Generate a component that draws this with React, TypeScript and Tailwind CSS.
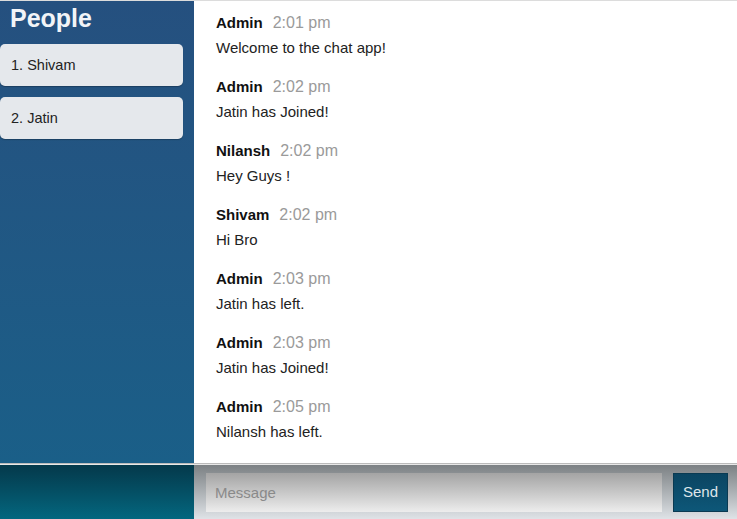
import React from "react";

const people = ["Shivam", "Jatin"];

const messages = [
  { from: "Admin", at: "2:01 pm", text: "Welcome to the chat app!" },
  { from: "Admin", at: "2:02 pm", text: "Jatin has Joined!" },
  { from: "Nilansh", at: "2:02 pm", text: "Hey Guys !" },
  { from: "Shivam", at: "2:02 pm", text: "Hi Bro" },
  { from: "Admin", at: "2:03 pm", text: "Jatin has left." },
  { from: "Admin", at: "2:03 pm", text: "Jatin has Joined!" },
  { from: "Admin", at: "2:05 pm", text: "Nilansh has left." },
];

export default function App() {
  return (
    <div className="w-[737px] h-[519px] flex flex-col overflow-hidden bg-white font-['Liberation_Sans',Arial,sans-serif]">
      {/* Main area */}
      <div className="flex h-[464px] border-t border-[#dcdcdc]">
        {/* Sidebar */}
        <div className="w-[194px] shrink-0 bg-gradient-to-b from-[#25507f] to-[#1a5f88]">
          <h3 className="pl-[10px] pt-[2px] h-[43px] text-[25px] leading-[30px] font-bold text-[#f2f4f7]">
            People
          </h3>
          <ol className="flex flex-col gap-[11px] pr-[11px]">
            {people.map((p, i) => (
              <li
                key={p}
                className="h-[42px] flex items-center pl-[11px] pt-[1px] rounded-[5px] bg-[#e5e8ec] text-[14.5px] text-[#222] shadow-[0_1px_1px_rgba(0,0,0,0.25)]"
              >
                {i + 1}. {p}
              </li>
            ))}
          </ol>
        </div>

        {/* Messages */}
        <div className="flex-1 pl-[22px] pt-[12px]">
          {messages.map((m, i) => (
            <div key={i} className="mb-[19px]">
              <div className="flex items-center gap-[10px] h-[20px]">
                <span className="font-bold text-[15px] text-[#111]">{m.from}</span>
                <span className="text-[#9a9a9a] text-[16px]">{m.at}</span>
              </div>
              <p className="mt-[5px] h-[20px] leading-[20px] text-[15px] text-[#222]">
                {m.text}
              </p>
            </div>
          ))}
        </div>
      </div>

      {/* Footer */}
      <div className="flex h-[55px] border-t border-[#e8e8e8] shadow-[0_-1px_0_#bbb]">
        <div className="w-[194px] shrink-0 bg-gradient-to-b from-[#04394b] to-[#03677f]" />
        <div className="flex-1 flex gap-[11px] pl-[12px] pr-[9px] pt-[8px] bg-gradient-to-b from-[#7c8184] to-[#dfe3e7]">
          <div className="flex-1 h-[39px] flex items-center pl-[9px] pt-[1px] bg-gradient-to-b from-[#a4a4a4] to-[#ededed] text-[15px] text-[#8a8a8a]">
            Message
          </div>
          <button className="w-[55px] h-[39px] bg-gradient-to-b from-[#0b4562] to-[#0d5778] border border-[#0a3a52] text-[15px] text-[#dfe6ea]">
            Send
          </button>
        </div>
      </div>
    </div>
  );
}
